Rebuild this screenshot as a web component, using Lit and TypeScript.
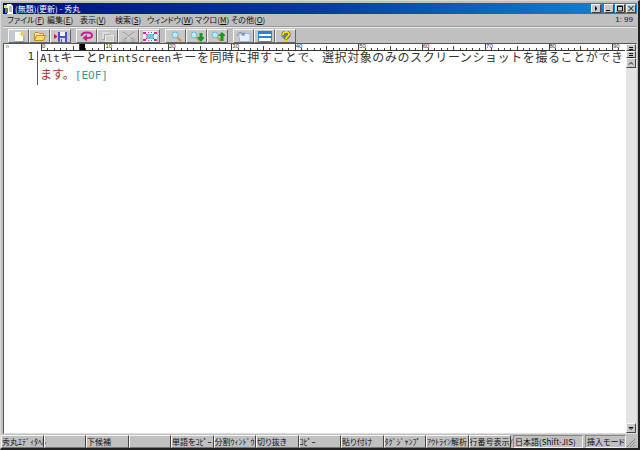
import { LitElement, html, svg, css } from "lit";
import { customElement } from "lit/decorators.js";

const magnifier = svg`<path d="M7.500 6.500L11 10" stroke="#d89040" stroke-width="2"/><circle cx="5" cy="4" r="3" fill="#b8ecff" stroke="#7cb0d0"/>`;

const icons: Record<string, unknown> = {
  new: svg`<path d="M2.500 .5h6l3 3V10.500H2.500z" fill="#fffef4" stroke="#b4cce8"/><path d="M2.500 10.500h9.500V5" fill="none" stroke="#7ca4dc"/><path d="M10 0l1 2 2 1-2 1-1 2-1-2-2-1 2-1z" fill="#ffc83c"/>`,
  open: svg`<path d="M1.500 9.500V2.500l1-1h3l1 1h4v2" fill="#ffe898" stroke="#c08a20"/><path d="M1.500 9.500l2-5h9l-2 5z" fill="#ffdc70" stroke="#c08a20"/>`,
  save: svg`<path d="M0 3l3.500 2.500L0 8z" fill="#e01020"/><path d="M4 1h9v10H5L4 10z" fill="#4a50c8"/><path d="M6 1h5v4H6z" fill="#f0f0ff"/><path d="M6 7h5v4H6z" fill="#d8dcf8"/><path d="M7 8h1v3H7z" fill="#4a50c8"/>`,
  undo: svg`<path d="M1.500 5C1.500 2 4 1.500 7 1.500c3.500 0 5 1.500 5 3s-1.500 2.500-5 2.500H5" fill="none" stroke="#d01890" stroke-width="2"/><path d="M7 3.500v7L2.500 7z" fill="#d01890"/>`,
  copy: svg`<path d="M1 1h8v7H1z" fill="#dcdcdc"/><path d="M4 4h9v7H4z" fill="#e8e8e8"/><path d="M5 5h7v5H5z" fill="#d0d0d0"/><path d="M4 11.500h9.500V5M1 8.500h3M3.500 8V3.500H9" fill="none" stroke="#a4a4a4"/>`,
  cut: svg`<path d="M1 1l9 7M12 1L3 8" stroke="#a0a0a0" stroke-width="1.500"/><path d="M1 2l9 7M12 2L4 9" stroke="#dedede"/><circle cx="2.500" cy="9" r="1.500" fill="none" stroke="#a0a0a0"/><circle cx="11" cy="9" r="1.500" fill="none" stroke="#a0a0a0"/>`,
  select: svg`<path d="M0 0h14v11H0z" fill="#f2ecf4"/><path d="M3 3h8v5H3z" fill="#74c4d8"/><path d="M0 1h3v2H0zM5 1h1v1H5zM8 1h1v1H8zM11 1h3v2h-3zM0 8h3v2H0zM5 9h1v1H5zM8 9h1v1H8zM11 8h3v2h-3z" fill="#e0209c"/><path d="M2 2l2 2M12 2l-2 2M2 9l2-2M12 9l-2-2" stroke="#e0209c"/>`,
  find: svg`<g transform="translate(1 0)">${magnifier}</g>`,
  findDown: svg`<g transform="translate(-1 0)">${magnifier}</g><path d="M9.500 2h3v4H15l-4 5-4-5h2.500z" fill="#109820"/>`,
  findUp: svg`<g transform="translate(-1 0)">${magnifier}</g><path d="M9.500 10h3V5H15l-4-4-4 4h2.500z" fill="#109820"/>`,
  tag: svg`<path d="M4 2.500h9v8H2.500V7" fill="#e4f0ff" stroke="#9cb4e0"/><path d="M.5 5C0 1 5 .5 6.500 3.500" fill="none" stroke="#7888b8"/><path d="M7.500 1v4L4 4z" fill="#7888b8"/>`,
  split: svg`<path d="M.5.5h13v10H.5z" fill="#fff" stroke="#3c88d0"/><path d="M0 0h14v3H0zM0 5h14v2H0z" fill="#3080cc"/>`,
  help: svg`<path d="M2 5l5-4 5 4-5 5z" fill="#6080c8"/><path d="M4 4c0-4 6-4 6-.5C10 5.500 7 5 7 8" fill="none" stroke="#60500c" stroke-width="3"/><path d="M4 4c0-4 6-4 6-.5C10 5.500 7 5 7 8" fill="none" stroke="#ffdc10" stroke-width="2"/><circle cx="7" cy="10" r="1.500" fill="#f0cc10"/>`,
};

const toolGroups: [string, string][][] = [
  [["new", "新規作成"], ["open", "開く"], ["save", "保存"]],
  [["undo", "元に戻す"], ["copy", "コピー"], ["cut", "切り抜き"], ["select", "すべて選択"]],
  [["find", "検索"], ["findDown", "下検索"], ["findUp", "上検索"]],
  [["tag", "タグジャンプ"], ["split", "分割"], ["help", "ヘルプ"]],
];

const menus = [["ファイル", "F"], ["編集", "E"], ["表示", "V"], ["検索", "S"], ["ウィンドウ", "W"], ["マクロ", "M"], ["その他", "O"]];

const functionKeys = ["秀丸ｴﾃﾞｨﾀﾍﾙ", "", "下候補", "", "単語をｺﾋﾟｰ", "分割ｳｨﾝﾄﾞｳ", "切り抜き", "ｺﾋﾟｰ", "貼り付け", "ﾀｸﾞｼﾞｬﾝﾌﾟ", "ｱｳﾄﾗｲﾝ解析", "行番号表示/"];

const COLUMNS = 92;
const CARET = 6;

@customElement("editor-ruler")
class EditorRuler extends LitElement {
  static styles = css`
    :host { display: flex; height: 7px; border-bottom: 1px solid #333; font: 6px/5px "Liberation Sans", sans-serif; color: #333; box-sizing: border-box; }
    .unit { flex: 1 1 0; min-width: 0; box-sizing: border-box; border-left: 1px solid #444; height: 2px; align-self: flex-end; }
    .five { height: 4px; }
    .ten { height: 6px; white-space: nowrap; }
    .caret { height: 6px; background: #000; }
  `;
  render() {
    return Array.from({ length: COLUMNS }, (_, i) => {
      const kind = i % 10 === 0 ? "ten" : i === CARET ? "caret" : i % 5 === 0 ? "five" : "";
      return html`<div class="unit ${kind}">${i % 10 === 0 ? i : ""}</div>`;
    });
  }
}

@customElement("app-root")
class AppRoot extends LitElement {
  static styles = css`
    * { box-sizing: border-box; }
    :host {
      display: flex; flex-direction: column; height: 100vh; box-sizing: border-box; overflow: hidden;
      padding: 2px 1px 0 2px; background: #c0c0c0;
      border: 1px solid; border-color: #d8d8d8 #222 #222 #d8d8d8; border-right-width: 2px; border-bottom-width: 2px;
      font: 8px/10px "Noto Sans CJK JP", sans-serif; font-feature-settings: "palt"; color: #111;
    }
    button { font: inherit; font-feature-settings: inherit; color: inherit; padding: 0; margin: 0; border: 0; background: none; white-space: nowrap; text-align: left; }
    svg { display: block; }
    .title { display: flex; align-items: center; height: 11px; flex: none; padding: 0 1px; background: linear-gradient(90deg, #001080, #0838a0 48%, #1088d8); color: #fff; }
    .title h1 { margin: 0 auto 0 0; padding-left: 1px; font: inherit; }
    .win { display: flex; gap: 1px; }
    .win .first { margin-right: 2px; }
    .raised { display: grid; place-items: center; background: #c8c8c8; border: 1px solid; border-color: #f4f4f4 #444 #444 #f4f4f4; color: #111; }
    .win .raised { width: 10px; height: 9px; }
    .menu { display: flex; height: 13px; flex: none; align-items: center; padding: 0 4px; border-bottom: 1px solid #989898; }
    nav { display: grid; grid-template-columns: 40px 33px 35px 32px 48px 36px 36px; margin-right: auto; }
    .menu output { font: 8px/10px "Liberation Sans", sans-serif; }
    .tools { display: flex; gap: 5px; height: 16px; flex: none; padding: 1px 5px 0; border-top: 1px solid #ececec; }
    .group { display: flex; }
    .group .raised { width: 21px; height: 14px; border-color: #f4f4f4 #666 #666 #f4f4f4; }
    .editor { display: flex; flex: 1; min-height: 0; border: 1px solid; border-color: #555 #ddd #ddd #555; background: #fff; }
    .page { flex: 1; min-width: 0; padding-right: 1px; }
    .top { display: flex; height: 7px; }
    .mark { width: 37px; flex: none; padding-left: 1px; color: #999; font: 8px/6px "Liberation Sans", sans-serif; }
    editor-ruler { flex: 1; min-width: 0; }
    .doc { display: flex; font: 12px/11px "Noto Sans CJK JP", sans-serif; font-feature-settings: normal; color: #333; }
    .number, .latin { font-family: "DejaVu Sans Mono", monospace; font-size: 11px; }
    .number { width: 34px; flex: none; padding-right: 3px; text-align: right; border-right: 1px solid #555; }
    .text { flex: 1; min-width: 0; padding: 0 2px; }
    .text p { margin: 0; height: 17px; white-space: nowrap; }
    .text .full { text-align: justify; text-align-last: justify; white-space: normal; }
    .more { color: #963030; }
    .eof { color: #309898; }
    .scroll { display: flex; flex-direction: column; width: 10px; flex: none; background: #e4e4e4; }
    .scroll .raised { width: 10px; height: 10px; flex: none; }
    .scroll .half { height: 7px; }
    .scroll .down { margin-top: auto; }
    footer { display: flex; height: 14px; flex: none; padding-top: 1px; margin-left: -2px; line-height: 11px; }
    .keys { display: grid; grid-template-columns: repeat(12, minmax(0, 1fr)); flex: 1; min-width: 0; }
    .keys button { border: 1px solid; border-color: #f4f4f4 #444 #777 #f4f4f4; }
    .pane { border: 1px solid; border-color: #888 #eee #eee #888; padding: 0 1px; white-space: nowrap; margin-left: 2px; }
    .code { width: 70px; }
    .mode { width: 41px; }
    .grip { width: 11px; height: 9px; margin: 3px 0 0; }
  `;

  render() {
    const shape = (d: string) => html`<svg width="8" height="7" viewBox="0 0 8 7" fill="none" stroke="#111"><path d=${d} /></svg>`;
    return html`
      <header class="title">
        <svg width="10" height="10" viewBox="0 0 10 10"><path d="M3 0h4l2 2v8H3z" fill="#fff"/><path d="M0 1h3v3H0z" fill="#e8e850"/><path d="M1 4h3v5H1z" fill="#508850"/><path d="M5 3h3M5 5h3M5 7h3" stroke="#778"/></svg>
        <h1>(無題)(更新) - 秀丸</h1>
        <div class="win">
          <button class="raised first" aria-label="次へ">${shape("M3.500 1.500v4M4.500 2.500v2")}</button>
          <button class="raised" aria-label="最小化">${shape("M1 5.500h4")}</button>
          <button class="raised" aria-label="最大化">${shape("M1.500 1h5v5h-5zM1 1.500h6")}</button>
          <button class="raised" aria-label="閉じる">${shape("M1.500 1l5 5M6.500 1l-5 5")}</button>
        </div>
      </header>
      <div class="menu">
        <nav>${menus.map(([name, key]) => html`<button>${name}(<u>${key}</u>)</button>`)}</nav>
        <output>1: 99</output>
      </div>
      <div class="tools">
        ${toolGroups.map((group) => html`<div class="group">
          ${group.map(([icon, label]) => html`<button class="raised" aria-label=${label}><svg width="14" height="11" viewBox="0 0 14 11">${icons[icon]}</svg></button>`)}
        </div>`)}
      </div>
      <main class="editor">
        <div class="page">
          <div class="top"><div class="mark">»</div><editor-ruler></editor-ruler></div>
          <div class="doc">
            <div class="number">1</div>
            <div class="text" lang="ja">
              <p class="full"><span class="latin">Alt</span>キーと<span class="latin">PrintScreen</span>キーを同時に押すことで、選択対象のみのスクリーンショットを撮ることができ</p>
              <p class="more">ます。<span class="latin eof">[EOF]</span></p>
            </div>
          </div>
        </div>
        <div class="scroll">
          <button class="raised half" aria-label="ルーラー">${shape("M2 2.500h4M2 4.500h4")}</button>
          <button class="raised half" aria-label="分割">${shape("M2 1.500h4M2 3.500h4M2 5.500h4")}</button>
          <button class="raised" aria-label="上へ">${shape("M2 4.500l2-2 2 2")}</button>
          <button class="raised down" aria-label="下へ">${shape("M2 2.500l2 2 2-2z")}</button>
        </div>
      </main>
      <footer>
        <div class="keys">${functionKeys.map((name) => html`<button>${name}</button>`)}</div>
        <div class="pane code">日本語(Shift-JIS)</div>
        <div class="pane mode">挿入モード</div>
        <svg class="grip" viewBox="0 0 11 9" stroke="#888"><path d="M1 9l8-8M4 9l5-5M7 9l2-2"/></svg>
      </footer>
    `;
  }
}
